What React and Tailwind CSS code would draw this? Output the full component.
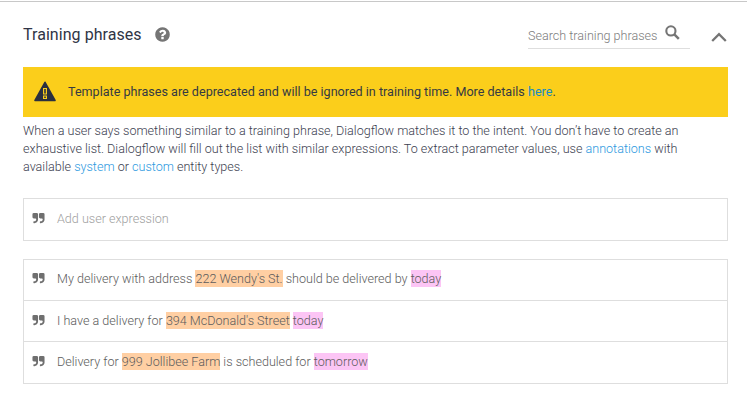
function Icon({ d, className }) {
  return (
    <svg viewBox="0 0 1792 1792" fill="currentColor" className={className} aria-hidden="true">
      <path d={d} />
    </svg>
  );
}

const HELP =
  "M1024 1376v-192q0-14-9-23t-23-9h-192q-14 0-23 9t-9 23v192q0 14 9 23t23 9h192q14 0 23-9t9-23zm256-672q0-88-55.5-163t-138.5-116-170-41q-243 0-371 213-15 24 8 42l132 100q7 6 19 6 16 0 25-12 53-68 86-92 34-24 86-24 48 0 85.5 26t37.5 59q0 38-20 61t-68 45q-63 28-115.5 86.5t-52.5 125.5v36q0 14 9 23t23 9h192q14 0 23-9t9-23q0-19 21.5-49.5t54.5-49.5q32-18 49-28.5t46-35 44.5-48 28-60.5 12.5-81zm384 192q0 209-103 385.5t-279.5 279.5-385.5 103-385.5-103-279.5-279.5-103-385.5 103-385.5 279.5-279.5 385.5-103 385.5 103 279.5 279.5 103 385.5z";
const QUOTE =
  "M832 320v704q0 104-40.5 198.5t-109.5 163.5-163.5 109.5-198.5 40.5h-64q-26 0-45-19t-19-45v-128q0-26 19-45t45-19h64q106 0 181-75t75-181v-32q0-40-28-68t-68-28h-224q-80 0-136-56t-56-136v-384q0-80 56-136t136-56h384q80 0 136 56t56 136zm896 0v704q0 104-40.5 198.5t-109.5 163.5-163.5 109.5-198.5 40.5h-64q-26 0-45-19t-19-45v-128q0-26 19-45t45-19h64q106 0 181-75t75-181v-32q0-40-28-68t-68-28h-224q-80 0-136-56t-56-136v-384q0-80 56-136t136-56h384q80 0 136 56t56 136z";

function Row({ children, className = "" }) {
  return (
    <div className={`flex items-start pl-[7.5px] ${className}`}>
      <Icon d={QUOTE} className="mt-[2px] mr-[12.5px] size-[13px] shrink-0 text-[#6f6f6f]" />
      <p className="whitespace-pre leading-[17px]">{children}</p>
    </div>
  );
}

const Place = ({ children }) => <span className="inline-block h-[17px] bg-[#ffcfa3] align-top">{children}</span>;
const When = ({ children }) => <span className="inline-block h-[17px] bg-[#fcc5f5] align-top">{children}</span>;
const Link = ({ children }) => <a className="text-[#2b98e0]">{children}</a>;

export default function App() {
  return (
    <main className="h-[420px] w-[747px] overflow-hidden bg-white pt-px font-['Roboto',sans-serif] text-[12.59px]">
      <div className="h-px bg-[#c8c8c8]" />
      <section className="pr-[19px] pl-[23px]">
        <header className="flex h-[65px]">
          <h1 className="mt-[21px] w-[119px] text-base leading-6 whitespace-nowrap tracking-[0.05px] text-[#2f3445]">Training phrases</h1>
          <Icon d={HELP} className="mt-[24px] ml-[12px] size-[17px] text-[#757575]" />
          <div className="mt-[21px] ml-auto flex h-[26px] w-[162px] border-b border-[#dedede] font-light text-[#7c7c7c]">
            <span className="mt-[4px] w-[130px] leading-[18px] whitespace-nowrap">Search training phrases</span>
            <svg viewBox="0 0 16 16" fill="none" stroke="#757575" strokeWidth="2.1" className="mt-[2px] ml-[7px] size-4" aria-hidden="true">
              <circle cx="5.9" cy="5.9" r="4.6" />
              <path d="M9.3 9.3 13.8 13.8" strokeWidth="2.5" />
            </svg>
          </div>
          <svg viewBox="0 0 16 10" fill="none" stroke="#757575" strokeWidth="2.3" className="mt-[30px] mr-px ml-[21px] h-[10px] w-4" aria-hidden="true">
            <path d="M1.2 9 8 2.2 14.8 9" />
          </svg>
        </header>
        <div className="flex h-[50px] items-center bg-[#fbce1b] pl-[11px] text-[#353a42]">
          <svg viewBox="0 0 22 21" className="mb-[2px] h-[21px] w-[22px]" aria-hidden="true">
            <path d="M11 1.3 21 19.5H1Z" fill="#2b303f" stroke="#2b303f" strokeWidth="1.6" strokeLinejoin="round" />
            <path d="M9 7h4v6.5H9zM9 14.5h4v3.5H9z" fill="#fbce1b" />
            <path d="M10.2 8h1.6v4.5h-1.6zM10.2 15.5h1.6v1.4h-1.6z" fill="#2b303f" />
          </svg>
          <p className="ml-3 whitespace-nowrap">
            Template phrases are deprecated and will be ignored in training time. More details <a className="text-[#168bc2]">here</a>.
          </p>
        </div>
        <p className="pt-[5px] leading-[18px] font-light whitespace-nowrap text-[#3c4150]">
          When a user says something similar to a training phrase, Dialogflow matches it to the intent. You don’t have to create an
          <br />
          exhaustive list. Dialogflow will fill out the list with similar expressions. To extract parameter values, use <Link>annotations</Link> with
          <br />
          available <Link>system</Link> or <Link>custom</Link> entity types.
        </p>
        <Row className="mt-[22px] h-[43px] border border-[#dedede] pt-[11px] font-light text-[#a0a0a0]">Add user expression</Row>
        <div className="mt-[18px] h-[125px] border border-[#dedede] font-light text-[#5c5c5c]">
          <Row className="h-[41px] border-b border-[#dedede] pt-[10px]">
            My delivery with address <Place>222 Wendy's St.</Place> should be delivered by <When>today</When>
          </Row>
          <Row className="h-[41px] border-b border-[#dedede] pt-[11px]">
            I have a delivery for <Place>394 McDonald's Street</Place> <When>today</When>
          </Row>
          <Row className="h-[41px] pt-[11px]">
            Delivery for <Place>999 Jollibee Farm</Place> is scheduled for <When>tomorrow</When>
          </Row>
        </div>
      </section>
    </main>
  );
}
